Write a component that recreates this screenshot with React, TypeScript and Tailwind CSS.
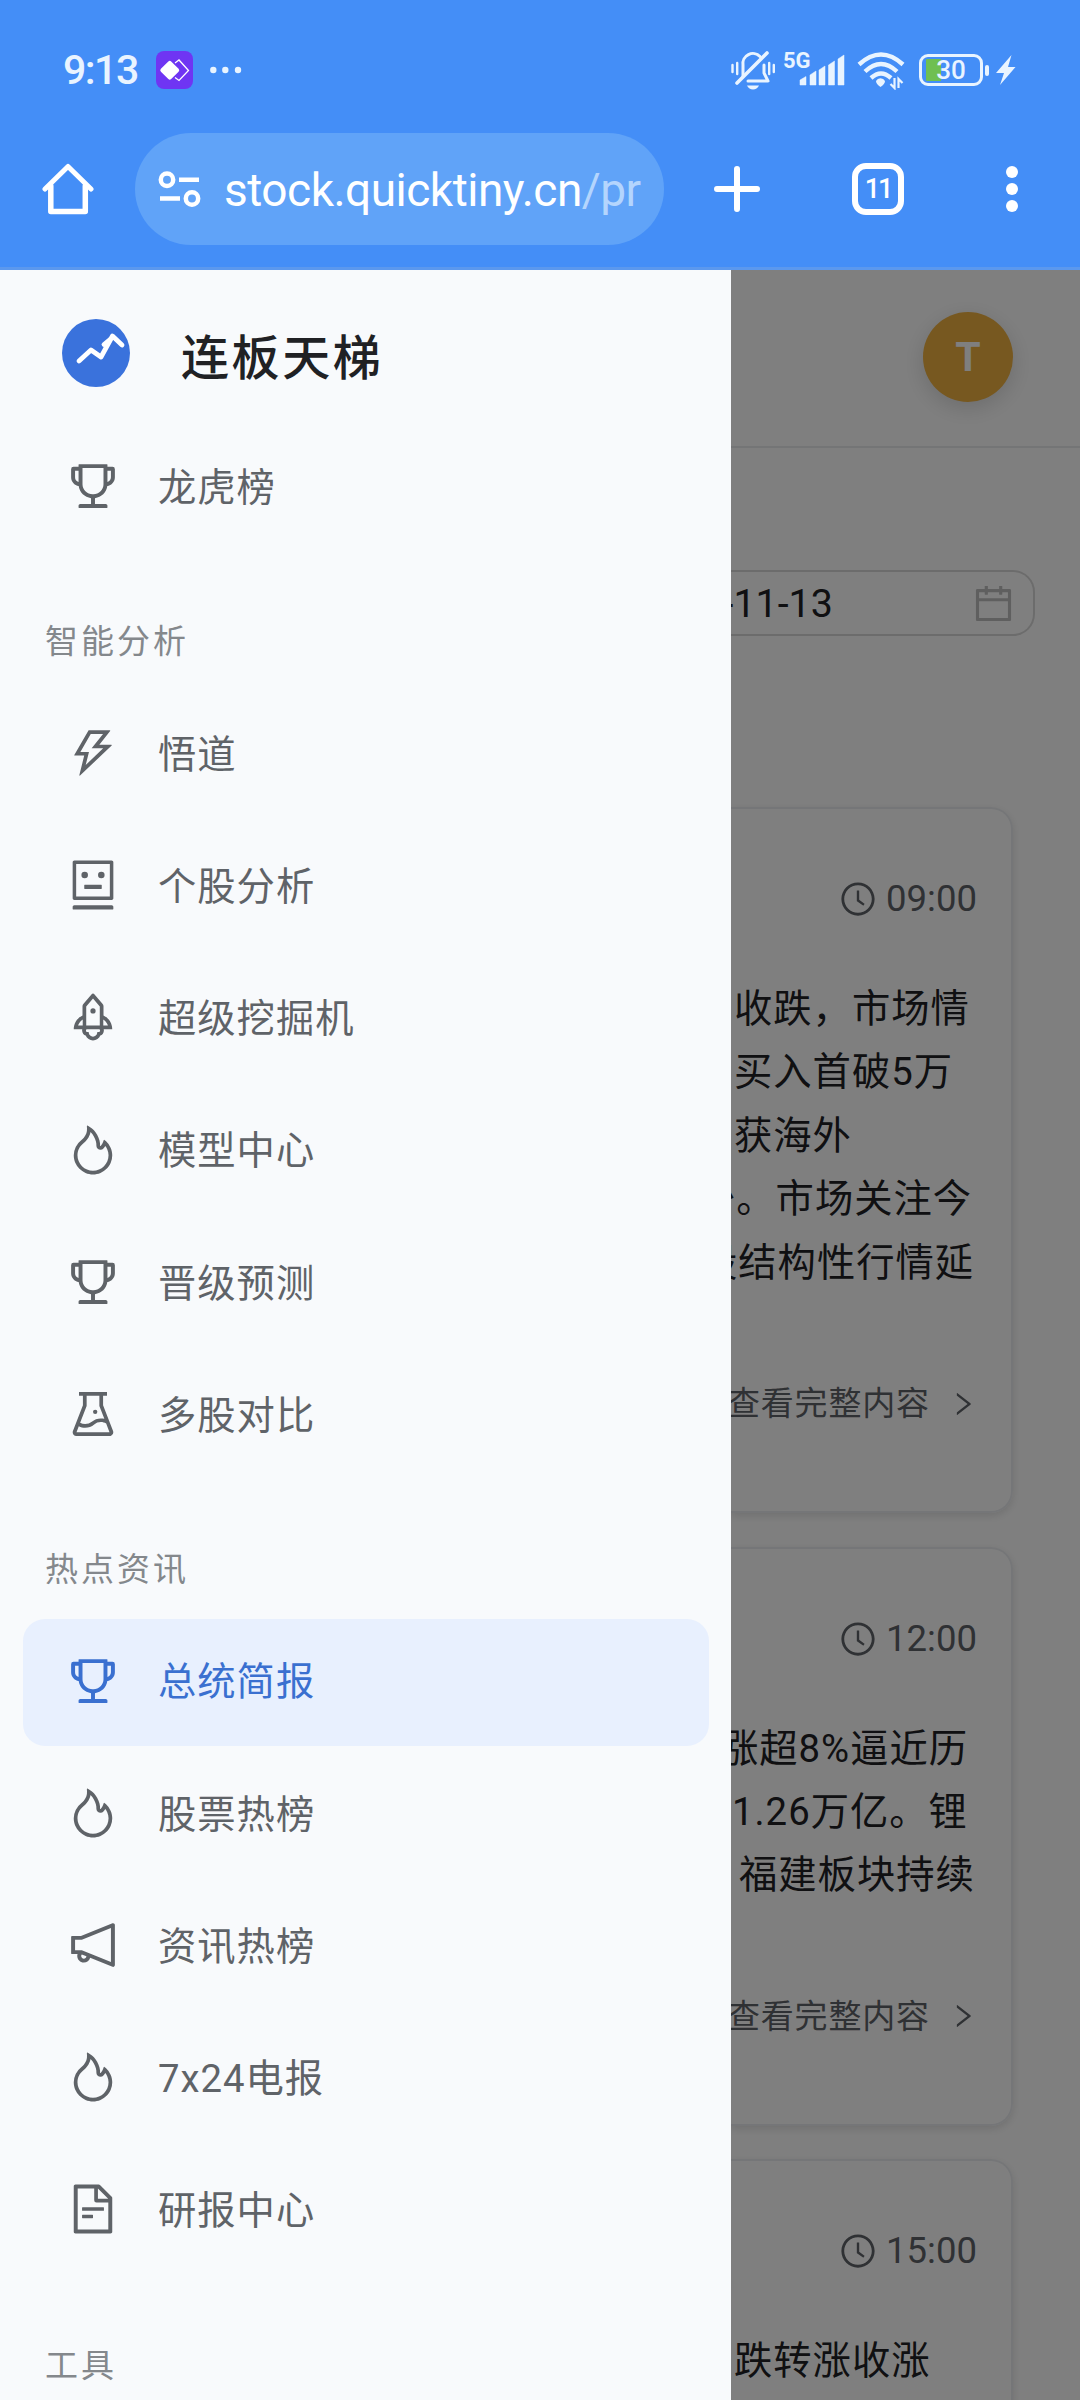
import type { IconType } from "react-icons";
import {
    AiOutlineCalendar,
    AiOutlineClockCircle,
    AiOutlineExperiment,
    AiOutlineFileText,
    AiOutlineFire,
    AiOutlineNotification,
    AiOutlineRight,
    AiOutlineRobot,
    AiOutlineRocket,
    AiOutlineThunderbolt,
    AiOutlineTrophy,
} from "react-icons/ai";

type MenuItem = { label: string; icon: IconType; active?: boolean };
type MenuGroup = { title?: string; items: MenuItem[] };

const menu: MenuGroup[] = [
    { items: [{ label: "龙虎榜", icon: AiOutlineTrophy }] },
    {
        title: "智能分析",
        items: [
            { label: "悟道", icon: AiOutlineThunderbolt },
            { label: "个股分析", icon: AiOutlineRobot },
            { label: "超级挖掘机", icon: AiOutlineRocket },
            { label: "模型中心", icon: AiOutlineFire },
            { label: "晋级预测", icon: AiOutlineTrophy },
            { label: "多股对比", icon: AiOutlineExperiment },
        ],
    },
    {
        title: "热点资讯",
        items: [
            { label: "总统简报", icon: AiOutlineTrophy, active: true },
            { label: "股票热榜", icon: AiOutlineFire },
            { label: "资讯热榜", icon: AiOutlineNotification },
            { label: "7x24电报", icon: AiOutlineFire },
            { label: "研报中心", icon: AiOutlineFileText },
        ],
    },
    { title: "工具", items: [] },
];

// shift: where the visible part of a line starts, relative to the drawer edge
const briefs = [
    {
        time: "09:00",
        lines: [
            { text: "收跌，市场情", shift: 3 },
            { text: "买入首破5万", shift: 3 },
            { text: "获海外", shift: 3 },
            { text: "少。市场关注今", shift: -34 },
            { text: "股结构性行情延", shift: -32 },
        ],
    },
    {
        time: "12:00",
        lines: [
            { text: "涨超8%逼近历", shift: -11 },
            { text: "1.26万亿。锂", shift: 1 },
            { text: "福建板块持续", shift: 8 },
        ],
    },
    { time: "15:00", lines: [{ text: "跌转涨收涨", shift: 3 }] },
];

function StatusBar() {
    return (
        <div className="flex h-[133px] items-center pt-[7px] pl-[63px] text-[#e9f4ff]">
            <span className="w-[93px] text-[41px] leading-none font-medium tracking-[-1.500px]">9:13</span>
            <svg className="h-[38px] w-[37px]" viewBox="0 0 37 38">
                <rect width="37" height="38" rx="8" fill="#6f35f3" />
                <path d="M19 12l4-3 9.500 10.500-9.500 10-4-3" fill="none" stroke="#fff" strokeWidth="1.300" />
                <rect x="6.500" y="12" width="14.500" height="14.500" rx="2" fill="#fff" transform="rotate(45 13.750 19.250)" />
            </svg>
            <svg className="ml-[17px] h-2 w-8" viewBox="0 0 32 8" fill="currentColor">
                <circle cx="3.300" cy="4" r="3.200" />
                <circle cx="15.300" cy="4" r="3.200" />
                <circle cx="28" cy="4" r="3.200" />
            </svg>

            <svg className="ml-[489px] h-10 w-[44px] shrink-0" viewBox="0 0 44 40" fill="none" stroke="currentColor" strokeWidth="3" strokeLinecap="round">
                <path d="M12 26V15a10 10 0 0 1 17-8.500" />
                <path d="M33 15v8l4 8H17" strokeLinejoin="round" />
                <path d="M6 33L36 3" strokeWidth="3.600" />
                <path d="M1.500 15v7M6.200 13v11M38.200 13v11M42.800 15v7" strokeWidth="2.400" />
                <path d="M16 35.500h12q-2 4-6 4t-6-4z" fill="currentColor" stroke="none" />
            </svg>
            <div className="relative ml-[8px] h-10 w-[62px] shrink-0">
                <span className="absolute top-0 left-0 text-[22px] leading-none font-bold">5G</span>
                <svg className="h-10 w-[62px]" viewBox="0 0 62 40" fill="currentColor">
                    <path d="M17 30l6-3.500V35h-6zM27 25l6-4V35h-6zM36 20l6-4V35h-6zM45.500 15l6-4V35h-6zM55 9l6-4V35h-6z" stroke="currentColor" strokeWidth=".5" strokeLinejoin="round" />
                </svg>
            </div>
            <svg className="ml-[12px] h-10 w-[48px] shrink-0" viewBox="0 0 48 40" fill="none" stroke="currentColor" strokeWidth="4.400">
                <path d="M2 14.500Q24 -5.500 46 14.500" />
                <path d="M8 21.500Q24 6.500 40 21.500" />
                <path d="M14 28Q24 19 34 28" />
                <path d="M19 31a5 5 0 0 1 9 0q0 3-4.500 6-4.500-3-4.500-6z" fill="currentColor" stroke="none" />
                <path d="M37.500 28v10l-4-4M41.500 38V29l4 4" strokeWidth="2.200" />
            </svg>
            <div className="ml-[14px] flex h-8 w-[64px] shrink-0 items-center justify-center rounded-[9px] border-[3px] border-current bg-[linear-gradient(90deg,transparent_4px,#6fbf52_4px,#6fbf52_19px,transparent_19px)] bg-clip-content py-[2px]">
                <span className="text-[26px] leading-none font-medium">30</span>
            </div>
            <span className="ml-[2px] h-[11px] w-[4px] shrink-0 rounded-full bg-current" />
            <svg className="ml-[7px] h-8 w-5 shrink-0" viewBox="0 0 20 32" fill="currentColor">
                <path d="M15.500 1L0 19h8L4 31 19.500 13H12z" />
            </svg>
        </div>
    );
}

function AddressBar() {
    return (
        <div className="flex h-[112px] items-center pl-[42px] text-white">
            <svg className="h-[54px] w-[52px] shrink-0" viewBox="0 0 52 54" fill="none" stroke="currentColor" strokeWidth="5.500" strokeLinecap="round" strokeLinejoin="round">
                <path d="M3 27L26 4.500 49 27" strokeWidth="5" />
                <path d="M8.800 24v25.500h34.500V24" />
            </svg>
            <div className="ml-[41px] flex h-[112px] w-[529px] shrink-0 items-center rounded-full bg-[#60a3f8] pl-[23px]">
                <svg className="h-9 w-[43px] shrink-0" viewBox="0 0 43 36" fill="none" stroke="currentColor" strokeWidth="4.500">
                    <circle cx="9" cy="8.700" r="6.200" />
                    <path d="M21 8.700h20M2 27.500h20" />
                    <circle cx="34" cy="27.500" r="6.200" />
                </svg>
                <span className="ml-[23px] pt-[2px] text-[46px] leading-none tracking-[-0.500px] whitespace-nowrap">
                    stock.quicktiny.cn<span className="text-[#b4d5fd]">/pr</span>
                </span>
            </div>
            <svg className="ml-[50px] h-12 w-[46px] shrink-0" viewBox="0 0 46 48" stroke="currentColor" strokeWidth="6" strokeLinecap="round">
                <path d="M23 4v40M3 24h40" />
            </svg>
            <div className="ml-[92px] flex h-[52px] w-[52px] shrink-0 items-center justify-center rounded-[14px] border-[6px] border-white">
                <span className="text-[27px] leading-none font-medium tracking-[-2px]">11</span>
            </div>
            <div className="ml-[102px] flex flex-col gap-[5px]">
                <span className="size-3 rounded-full bg-white" />
                <span className="size-3 rounded-full bg-white" />
                <span className="size-3 rounded-full bg-white" />
            </div>
        </div>
    );
}

function Drawer() {
    return (
        <aside className="w-[731px] shrink-0 bg-[#f8fafc] pr-[22px] pl-[23px]">
            <div className="flex h-[155px] items-center pb-[1px] pl-[39px]">
                <svg className="mt-[11px] h-[68px] w-[68px]" viewBox="0 0 68 68">
                    <circle cx="34" cy="34" r="34" fill="#3a72dc" />
                    <path d="M17 42L29 31l10 7 11.500-21L60 26" fill="none" stroke="#fff" strokeWidth="4.800" strokeLinecap="round" strokeLinejoin="round" />
                    <path d="M42 25.500l6-5" stroke="#fff" strokeWidth="4.800" strokeLinecap="round" />
                </svg>
                <span className="mt-[24px] ml-[51px] text-[48px] leading-none font-medium tracking-[2.600px] text-[#202124]">连板天梯</span>
            </div>
            {menu.map((group, i) => (
                <nav key={i}>
                    {group.title && (
                        <div className="flex h-[134.500px] items-center pt-[35px] pl-[22px] text-[33px] leading-none tracking-[3px] text-[#84888c]">
                            {group.title}
                        </div>
                    )}
                    {group.items.map((item) => (
                        <div
                            key={item.label}
                            className={`mb-[5.700px] flex h-[126.500px] items-center rounded-[22px] pl-[42px] ${
                                item.active ? "bg-[#e8f0fe] text-[#3a70d0]" : "text-[#5f6368]"
                            }`}
                        >
                            <item.icon className="-mt-1 size-[56px]" />
                            <span className="ml-[37px] text-[38.300px] leading-none tracking-[1px]">{item.label}</span>
                        </div>
                    ))}
                </nav>
            ))}
        </aside>
    );
}

function Page() {
    return (
        <main className="relative flex-1 overflow-hidden bg-white">
            <header className="flex h-[178px] items-center justify-end border-b-2 border-[#e8eaed] pr-[67px] pb-[2px]">
                <div className="flex size-[90px] items-center justify-center rounded-full bg-[#eeb040] pt-[2px] text-[41px] font-bold text-white shadow-[0_6px_22px_rgba(0,0,0,0.15)]">
                    T
                </div>
            </header>
            <div className="mt-[122px] mr-[45px] flex h-[66px] items-center justify-between rounded-r-[22px] border-2 border-l-0 border-[#d9d9d9] pr-[17px] text-[#202124]">
                <span className="ml-[-97px] pt-[1px] text-[39.400px] leading-none">2025-11-13</span>
                <AiOutlineCalendar className="size-[45px] text-[#bfbfbf]" />
            </div>
            <div className="mt-[171px] mr-[67px] flex flex-col gap-[33.500px]">
                {briefs.map((brief) => (
                    <article
                        key={brief.time}
                        className="rounded-r-[22px] border-2 border-l-0 border-[#ebedf0] pr-[34px] shadow-[0_3px_9px_rgba(0,0,0,0.12)]"
                    >
                        <div className="flex items-center justify-end pt-[66px] text-[#5f6368]">
                            <AiOutlineClockCircle className="size-[38px]" />
                            <span className="ml-[9px] text-[36.500px] leading-[48px]">{brief.time}</span>
                        </div>
                        <div className="mt-[54px] text-[38.300px] leading-[63.400px] tracking-[1px] whitespace-nowrap text-[#202124]">
                            {brief.lines.map((line) => (
                                <p key={line.text} style={{ marginLeft: line.shift }}>
                                    {line.text}
                                </p>
                            ))}
                        </div>
                        <div className="mt-[86px] flex h-[48px] items-center justify-between pb-[1px] text-[33px] leading-none tracking-[0.800px] text-[#5f6368]">
                            <span className="ml-[-4px] whitespace-nowrap">查看完整内容</span>
                            <AiOutlineRight className="-mr-[1px] size-[30px]" />
                        </div>
                        <div className="h-[83px]" />
                    </article>
                ))}
            </div>
            <div className="absolute inset-0 bg-black/50" />
        </main>
    );
}

export default function App() {
    return (
        <div className="flex h-[2400px] w-[1080px] flex-col overflow-hidden font-['Roboto','Noto_Sans_CJK_SC',sans-serif]">
            <div className="h-[270px] shrink-0 border-b-[3px] border-[#5b98ee] bg-[#448ef7]">
                <StatusBar />
                <AddressBar />
            </div>
            <div className="flex min-h-0 flex-1 overflow-hidden">
                <Drawer />
                <Page />
            </div>
        </div>
    );
}
